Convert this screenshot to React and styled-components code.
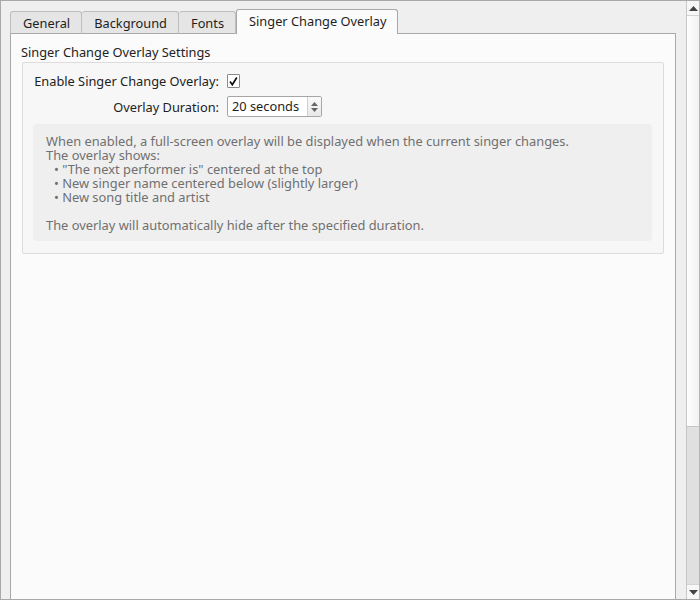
import React from 'react';
import styled, { createGlobalStyle } from 'styled-components';

const GlobalStyle = createGlobalStyle`
  html, body {
    margin: 0;
    padding: 0;
    background: #efefef;
  }
  * { box-sizing: border-box; }
`;

const Window = styled.div`
  width: 700px;
  height: 600px;
  display: flex;
  flex-direction: row;
  background: #efefef;
  border-top: 1px solid #a8a8a8;
  border-left: 1px solid #a8a8a8;
  border-bottom: 1px solid #a8a8a8;
  font-family: "Noto Sans", "DejaVu Sans", sans-serif;
  font-size: 12.8px;
  color: #222;
  overflow: hidden;
`;

const Main = styled.div`
  flex: 1;
  display: flex;
  flex-direction: column;
  padding: 9px 10px 0 9px;
  min-width: 0;
`;

const TabBar = styled.div`
  display: flex;
  align-items: flex-end;
  height: 24px;
  margin-bottom: -1px;
  position: relative;
  z-index: 1;
`;

const Tab = styled.div`
  height: ${p => (p.$active ? '25px' : '23px')};
  padding: 0 ${p => (p.$active ? '11px' : '11px')} 0 12px;
  display: flex;
  align-items: center;
  padding-bottom: ${p => (p.$active ? '2px' : '0')};
  background: ${p => (p.$active ? '#fbfbfb' : '#e5e5e5')};
  border: 1px solid ${p => (p.$active ? '#a9a9a9' : '#bdbdbd')};
  border-bottom: ${p => (p.$active ? 'none' : '1px solid #a9a9a9')};
  border-left: ${p => (p.$first || p.$active ? '' : 'none')};
  border-radius: 3px 3px 0 0;
  color: #1e1e1e;
  white-space: nowrap;
`;

const Pane = styled.div`
  flex: 1;
  background: #fbfbfb;
  border: 1px solid #a9a9a9;
  border-bottom: none;
  padding: 9px 11px 0 10px;
`;

const GroupTitle = styled.div`
  line-height: 18px;
  height: 19px;
`;

const Group = styled.div`
  margin-left: 1px;
  background: #f7f7f7;
  border: 1px solid #dcdcdc;
  border-radius: 2px;
  padding: 8px 10px 12px 10px;
`;

const Form = styled.div`
  display: grid;
  grid-template-columns: 186px 1fr;
  column-gap: 8px;
  row-gap: 5px;
  align-items: center;
`;

const Label = styled.div`
  text-align: right;
  white-space: nowrap;
`;

const Field = styled.div`
  display: flex;
  align-items: center;
  height: ${p => p.$h || 20}px;
`;

const CheckBox = styled.div`
  width: 13px;
  height: 14px;
  border: 1px solid #8a8a8a;
  background: #fff;
  border-radius: 1px;
  display: flex;
  align-items: center;
  justify-content: center;
`;

const Spin = styled.div`
  width: 95px;
  height: 21px;
  display: flex;
  border: 1px solid #a6a6a6;
  border-radius: 2px;
  background: #fff;
`;

const SpinText = styled.div`
  flex: 1;
  padding-left: 4px;
  line-height: 19px;
  color: #1e1e1e;
`;

const SpinButtons = styled.div`
  width: 14px;
  display: flex;
  flex-direction: column;
  align-items: center;
  justify-content: center;
  gap: 2px;
  border-left: 1px solid #cfcfcf;
  background: linear-gradient(#fafafa, #e8e8e8);
`;

const Info = styled.div`
  margin-top: 7px;
  margin-right: 1px;
  background: #efefef;
  border-radius: 4px;
  padding: 10px 13px 9px 13px;
  color: #707070;
  font-size: 12.85px;
  line-height: 14px;
`;

const Line = styled.div`
  height: 14px;
  white-space: pre;
  padding-left: ${p => (p.$bullet ? '8px' : '0')};
`;

const Scrollbar = styled.div`
  width: 14px;
  display: flex;
  flex-direction: column;
  border-left: 1px solid #c6c6c6;
  border-right: 1px solid #b5b5b5;
  background: #e2e2e2;
`;

const ArrowButton = styled.div`
  height: 15px;
  display: flex;
  align-items: center;
  justify-content: center;
  background: #f7f7f7;
  border-top: ${p => (p.$down ? '1px solid #d4d4d4' : 'none')};
  border-bottom: ${p => (p.$down ? 'none' : '1px solid #d4d4d4')};
`;

const Thumb = styled.div`
  height: 411px;
  background: linear-gradient(90deg, #ffffff, #f1f1f1);
  border-bottom: 1px solid #c4c4c4;
`;

const Track = styled.div`
  flex: 1;
  background: #e0e0e0;
`;

const Triangle = ({ down, color = '#444', w = 8, h = 4 }) => (
  <svg width={w} height={h} viewBox={`0 0 ${w} ${h}`}>
    <polygon
      points={down ? `0,0 ${w},0 ${w / 2},${h}` : `0,${h} ${w},${h} ${w / 2},0`}
      fill={color}
    />
  </svg>
);

const lines = [
  { t: 'When enabled, a full-screen overlay will be displayed when the current singer changes.' },
  { t: 'The overlay shows:' },
  { t: '• "The next performer is" centered at the top', b: true },
  { t: '• New singer name centered below (slightly larger)', b: true },
  { t: '• New song title and artist', b: true },
  { t: ' ' },
  { t: 'The overlay will automatically hide after the specified duration.' },
];

export default function App() {
  return (
    <>
      <GlobalStyle />
      <Window>
        <Main>
          <TabBar>
            <Tab $first>General</Tab>
            <Tab>Background</Tab>
            <Tab>Fonts</Tab>
            <Tab $active>Singer Change Overlay</Tab>
          </TabBar>
          <Pane>
            <GroupTitle>Singer Change Overlay Settings</GroupTitle>
            <Group>
              <Form>
                <Label>Enable Singer Change Overlay:</Label>
                <Field>
                  <CheckBox>
                    <svg width="11" height="11" viewBox="0 0 11 11">
                      <path d="M2 5.5 L4.3 8.8 L8.8 1.5" stroke="#111" strokeWidth="1.7" fill="none" />
                    </svg>
                  </CheckBox>
                </Field>
                <Label>Overlay Duration:</Label>
                <Field $h={21}>
                  <Spin>
                    <SpinText>20 seconds</SpinText>
                    <SpinButtons>
                      <Triangle color="#666" w={7} h={4} />
                      <Triangle down color="#666" w={7} h={4} />
                    </SpinButtons>
                  </Spin>
                </Field>
              </Form>
              <Info>
                {lines.map((l, i) => (
                  <Line key={i} $bullet={l.b}>{l.t}</Line>
                ))}
              </Info>
            </Group>
          </Pane>
        </Main>
        <Scrollbar>
          <ArrowButton>
            <Triangle w={9} h={5} />
          </ArrowButton>
          <Thumb />
          <Track />
          <ArrowButton $down>
            <Triangle down w={9} h={5} />
          </ArrowButton>
        </Scrollbar>
      </Window>
    </>
  );
}
